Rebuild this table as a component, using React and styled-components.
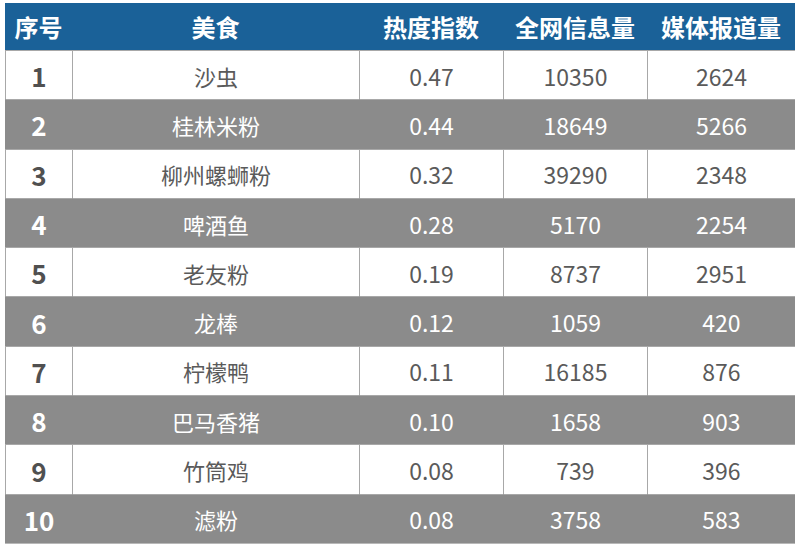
import React from "react";
import styled, { createGlobalStyle } from "styled-components";

const Global = createGlobalStyle`
  html, body { margin: 0; padding: 0; background: #fff; }
  body { font-family: "Noto Sans CJK SC", "Noto Sans", sans-serif; }
`;

const Table = styled.div`
  margin: 3px 0 0 5px;
  width: 790px;
  display: grid;
  grid-template-columns: 67px 287px 144px 144px 148px;
  border-right: 1px solid #b0b0b0;
  border-bottom: 1px solid #b8b8b8;
  box-sizing: border-box;
`;

const Head = styled.div`
  height: 47px;
  background: #1a6198;
  color: #fff;
  font-weight: 700;
  font-size: 24px;
  display: flex;
  align-items: center;
  justify-content: center;
  letter-spacing: 0;
`;

const Cell = styled.div`
  height: 49.3px;
  box-sizing: border-box;
  display: flex;
  align-items: center;
  justify-content: center;
  font-size: ${(p) => (p.$index ? "26px" : p.$num ? "23px" : "22px")};
  font-weight: ${(p) => (p.$index ? 700 : 400)};
  background: ${(p) => (p.$alt ? "#8b8b8b" : "#fff")};
  color: ${(p) => (p.$alt ? "#fff" : p.$index ? "#505050" : "#5a5a5a")};
  border-left: 1px solid ${(p) => (p.$alt ? "#8b8b8b" : "#a8a8a8")};
  border-top: 1px solid #a8a8a8;
  padding-top: 1px;
`;

const rows = [
  ["1", "沙虫", "0.47", "10350", "2624"],
  ["2", "桂林米粉", "0.44", "18649", "5266"],
  ["3", "柳州螺蛳粉", "0.32", "39290", "2348"],
  ["4", "啤酒鱼", "0.28", "5170", "2254"],
  ["5", "老友粉", "0.19", "8737", "2951"],
  ["6", "龙棒", "0.12", "1059", "420"],
  ["7", "柠檬鸭", "0.11", "16185", "876"],
  ["8", "巴马香猪", "0.10", "1658", "903"],
  ["9", "竹筒鸡", "0.08", "739", "396"],
  ["10", "滤粉", "0.08", "3758", "583"],
];

const heads = ["序号", "美食", "热度指数", "全网信息量", "媒体报道量"];

export default function App() {
  return (
    <>
      <Global />
      <Table>
        {heads.map((h) => (
          <Head key={h}>{h}</Head>
        ))}
        {rows.map((r, i) =>
          r.map((v, j) => (
            <Cell key={i + "-" + j} $alt={i % 2 === 1} $index={j === 0} $num={j >= 2}>
              {v}
            </Cell>
          ))
        )}
      </Table>
    </>
  );
}
